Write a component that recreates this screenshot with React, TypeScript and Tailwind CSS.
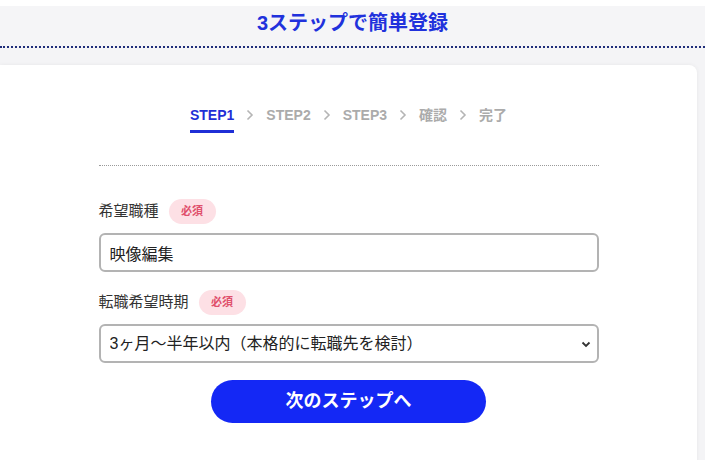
const font = 'font-["Liberation_Sans","Noto_Sans_CJK_JP",sans-serif]';

const steps = ['STEP1', 'STEP2', 'STEP3', '確認', '完了'];

function Chevron() {
  return (
    <svg width="8" height="12" viewBox="0 0 8 12" className="mx-[12px]">
      <path d="M1.5 1.5 L6 6 L1.5 10.5" fill="none" stroke="#b5b5b5" strokeWidth="1.6" />
    </svg>
  );
}

function Badge() {
  return (
    <span className="ml-[10px] inline-flex h-[25px] w-[47px] items-center justify-center rounded-full bg-[#fde0e5] text-[11px] font-bold text-[#e0506c]">
      必須
    </span>
  );
}

export default function App() {
  return (
    <div className={`h-[460px] w-[705px] overflow-hidden bg-[#f4f4f6] ${font}`}>
      <div className="h-[6px] bg-white" />
      <div className="flex h-[40px] items-center justify-center bg-[#f5f5f7] pb-[7px]">
        <h1 className="text-[20px] font-bold leading-none text-[#2131dc]">3ステップで簡単登録</h1>
      </div>
      <div className="h-[2px] border-t-2 border-dotted border-[#1f2d7a]" />
      <div className="h-[17px]" />
      <div className="mr-[8px] h-[420px] rounded-r-[8px] bg-white shadow-[0_0_4px_rgba(0,0,0,0.06)]">
        <div className="mx-auto flex w-[500px] flex-col pt-[38px]">
          {/* ステップ表示 */}
          <div className="flex items-center justify-center">
            {steps.map((s, i) => (
              <div key={s} className="flex items-center">
                {i > 0 && <Chevron />}
                <div className="relative">
                  <span
                    className={`text-[14px] font-bold leading-[22px] ${
                      i === 0 ? 'text-[#1f2fd6]' : 'text-[#ababab]'
                    }`}
                  >
                    {s}
                  </span>
                  {i === 0 && (
                    <div className="absolute left-0 right-0 top-[27px] h-[3px] bg-[#1f2fd6]" />
                  )}
                </div>
              </div>
            ))}
          </div>
          <div className="mt-[38px] border-t border-dotted border-[#9a9a9a]" />

          <label className="mt-[33px] flex items-center text-[15px] text-[#333]">
            希望職種
            <Badge />
          </label>
          <input
            className="mt-[9px] h-[39px] w-full rounded-[6px] border-2 border-[#b3b3b3] px-[9px] text-[16px] text-[#222] outline-none"
            defaultValue="映像編集"
          />

          <label className="mt-[18px] flex items-center text-[15px] text-[#333]">
            転職希望時期
            <Badge />
          </label>
          <div className="relative mt-[9px]">
            <select className="h-[39px] w-full appearance-none rounded-[6px] border-2 border-[#b3b3b3] bg-white px-[9px] text-[16px] text-[#222] outline-none">
              <option>3ヶ月〜半年以内（本格的に転職先を検討）</option>
            </select>
            <svg
              width="10"
              height="7"
              viewBox="0 0 10 7"
              className="pointer-events-none absolute right-[8px] top-[17px]"
            >
              <path d="M1.5 1.5 L5 5 L8.5 1.5" fill="none" stroke="#333" strokeWidth="1.8" />
            </svg>
          </div>

          <button
            type="button"
            className="mx-auto mt-[17px] h-[43px] w-[275px] rounded-full bg-[#1428f5] text-[18px] font-bold text-white"
          >
            次のステップへ
          </button>
        </div>
      </div>
    </div>
  );
}
